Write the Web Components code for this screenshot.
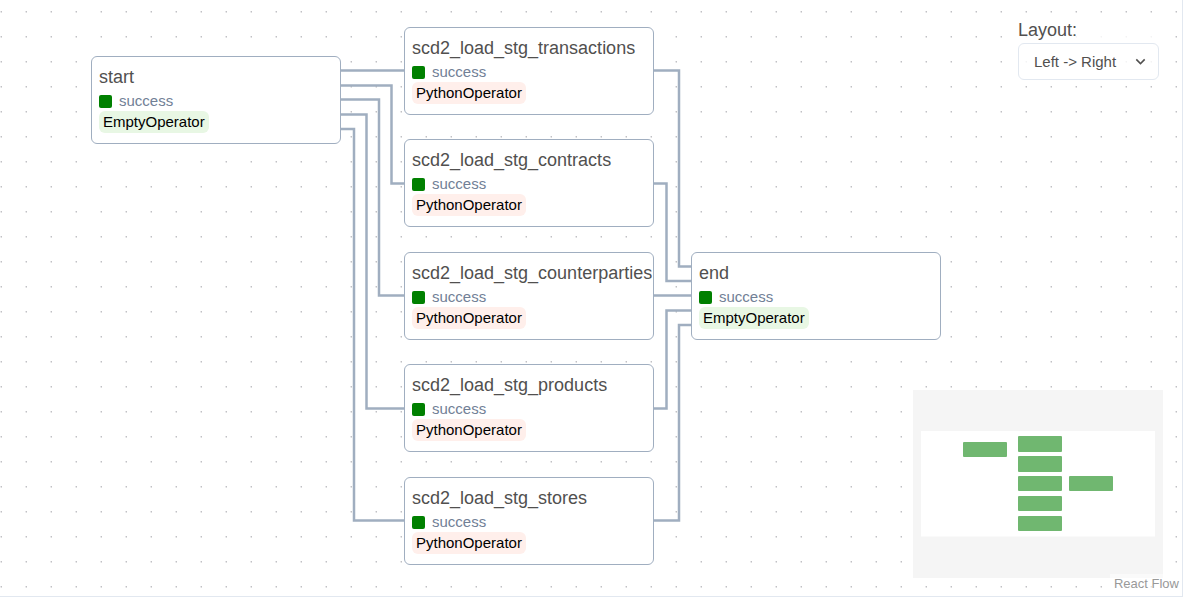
<!DOCTYPE html>
<html lang="en">
<head>
<meta charset="utf-8">
<title>DAG graph</title>
<style>
  body { margin: 0; background: #fff; font-family: "Liberation Sans", Arial, sans-serif; color: #51504f; }
</style>
</head>
<body>
<dag-graph></dag-graph>

<script>
const NODE_W = 250, NODE_H = 88;
const NODES = [
  { name: "start", op: "EmptyOperator", x: 91, y: 56 },
  { name: "scd2_load_stg_transactions", op: "PythonOperator", x: 404, y: 27 },
  { name: "scd2_load_stg_contracts", op: "PythonOperator", x: 404, y: 139 },
  { name: "scd2_load_stg_counterparties", op: "PythonOperator", x: 404, y: 252 },
  { name: "scd2_load_stg_products", op: "PythonOperator", x: 404, y: 364 },
  { name: "scd2_load_stg_stores", op: "PythonOperator", x: 404, y: 477 },
  { name: "end", op: "EmptyOperator", x: 691, y: 252 },
];
const EDGES = [
  "M341 70.5H404", "M341 85.5H391.5V183.5H404", "M341 99.5H379V295.5H404",
  "M341 114.5H366.5V408.5H404", "M341 129H354V520.5H404",
  "M654 70.5H679V266.5H691", "M654 183.5H666.5V281H691", "M654 295.5H691",
  "M654 408.5H666.5V310.5H691", "M654 520.5H679V325H691",
];

class TaskNode extends HTMLElement {
  connectedCallback() {
    this.attachShadow({ mode: "open" }).innerHTML = `
      <style>
        :host { display: flex; flex-direction: column; align-items: flex-start; box-sizing: border-box;
          padding: 8px 7px; border: 1px solid #a0aec0; border-radius: 6px; background: #fff; font-size: 15px; }
        .name { font-size: 18px; line-height: 24px; white-space: nowrap; }
        .state { display: flex; align-items: center; gap: 7px; padding-top: 2px; line-height: 20px; color: #718096; }
        .swatch { width: 13px; height: 13px; border-radius: 2px; background: #008000; }
        .op { padding: 0 4px; line-height: 22px; border-radius: 6px; color: #000;
          background: var(--op-color, #ffefeb); }
        :host([kind="EmptyOperator"]) { --op-color: #e8f7e4; }
      </style>
      <div class="name"><slot></slot></div>
      <div class="state"><span class="swatch"></span><span>success</span></div>
      <div class="op"><slot name="op"></slot></div>`;
  }
}
customElements.define("task-node", TaskNode);

class LayoutPicker extends HTMLElement {
  connectedCallback() {
    this.attachShadow({ mode: "open" }).innerHTML = `
      <style>
        :host { display: flex; flex-direction: column; background: rgba(255,255,255,.8); }
        label { font-size: 18px; line-height: 26px; }
        .field { display: grid; grid-template-columns: minmax(0, 1fr); align-items: center; }
        select, svg { grid-area: 1 / 1; }
        select { appearance: none; width: 100%; height: 37px; padding: 0 15px; border: 1px solid #e2e8f0;
          border-radius: 6px; background: transparent; color: inherit; font: 15px "Liberation Sans", Arial, sans-serif; }
        svg { justify-self: end; margin-right: 9px; width: 19px; height: 19px; pointer-events: none; }
      </style>
      <label for="layout">Layout:</label>
      <div class="field">
        <select id="layout"><option>Left -> Right</option><option>Top -> Bottom</option></select>
        <svg viewBox="0 0 24 24" fill="currentColor"><path d="M16.59 8.59 12 13.17 7.41 8.59 6 10l6 6 6-6z"/></svg>
      </div>`;
  }
}
customElements.define("layout-picker", LayoutPicker);

class MiniMap extends HTMLElement {
  connectedCallback() {
    const rects = [[50,52,15],[105,46,16],[105,66,16],[105,86,15],[105,106,15],[105,126,15],[156,86,15]]
      .map(([x, y, h]) => `<rect x="${x}" y="${y}" width="44" height="${h}" rx="1"/>`).join("");
    this.attachShadow({ mode: "open" }).innerHTML = `
      <style>:host { display: block; } svg { display: block; }</style>
      <svg width="250" height="188" viewBox="0 0 250 188">
        <path fill="#f5f5f5" d="M0 0h250v188H0z"/><path fill="#fff" d="M8 41h234v105.500H8z"/>
        <g fill="#70b770">${rects}</g>
      </svg>`;
  }
}
customElements.define("mini-map", MiniMap);

class DagGraph extends HTMLElement {
  connectedCallback() {
    const nodes = NODES.map(n =>
      `<task-node kind="${n.op}" style="left:${n.x}px;top:${n.y}px">${n.name}<span slot="op">${n.op}</span></task-node>`).join("");
    this.attachShadow({ mode: "open" }).innerHTML = `
      <style>
        :host { display: block; position: relative; box-sizing: border-box; height: calc(100vh - 1px); overflow: hidden;
          border: solid #e2e8f0; border-width: 0 1px 1px 0; }
        .scene { position: absolute; inset: 0; width: 100%; height: 100%; }
        .edges { fill: none; stroke: #a0aec0; stroke-width: 2.5; }
        task-node { position: absolute; width: ${NODE_W}px; height: ${NODE_H}px; }
        layout-picker { position: absolute; top: 17px; right: 23px; width: 141px; }
        mini-map { position: absolute; right: 19px; bottom: 18px; }
        a { position: absolute; right: 0; bottom: 0; padding: 2px 3px 5px 4px; background: rgba(255,255,255,.5);
          color: #999; font-size: 13px; line-height: 15px; text-decoration: none; }
      </style>
      <svg class="scene">
        <defs><pattern id="dots" width="25" height="25" patternUnits="userSpaceOnUse">
          <circle cx="1.200" cy="11.800" r=".65" fill="#81818a"/>
        </pattern></defs>
        <rect width="100%" height="100%" fill="url(#dots)"/>
        <path class="edges" d="${EDGES.join("")}"/>
      </svg>
      ${nodes}
      <layout-picker></layout-picker>
      <mini-map></mini-map>
      <a href="https://reactflow.dev">React Flow</a>`;
  }
}
customElements.define("dag-graph", DagGraph);
</script>
</body>
</html>
